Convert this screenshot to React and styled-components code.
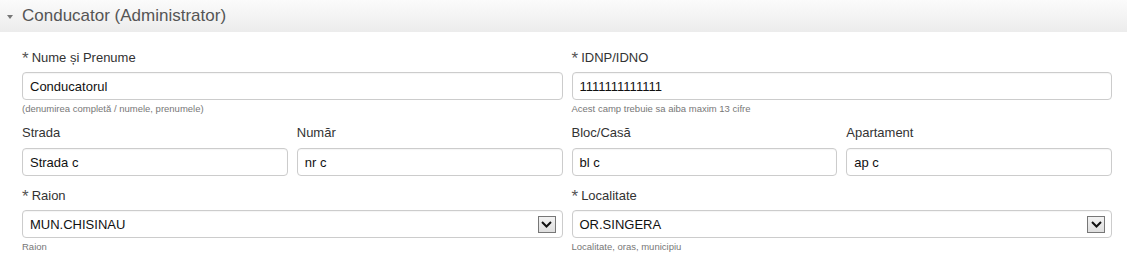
import React from "react";
import styled, { createGlobalStyle } from "styled-components";

const Global = createGlobalStyle`
  html, body { margin: 0; padding: 0; background: #fff; }
  body { font-family: "Liberation Sans", Arial, sans-serif; color: #333; }
  * { box-sizing: border-box; }
`;

const Panel = styled.section`
  width: 1127px;
`;

const Header = styled.div`
  height: 32px;
  display: flex;
  align-items: center;
  gap: 9px;
  padding-left: 7px;
  background: linear-gradient(to bottom, #fbfbfb 0%, #ececec 100%);
  color: #555;
  font-size: 17px;
`;

const Caret = styled.span`
  width: 0;
  height: 0;
  border-left: 3.5px solid transparent;
  border-right: 3.5px solid transparent;
  border-top: 4px solid #777;
  margin-top: 1px;
`;

const Body = styled.div`
  padding: 16px 15px 0 22px;
  display: flex;
  flex-direction: column;
  gap: 10px;
`;

const Row = styled.div`
  display: grid;
  grid-template-columns: ${(p) => p.$cols};
  column-gap: 9px;
`;

const Field = styled.div`
  display: flex;
  flex-direction: column;
  min-width: 0;
`;

const Label = styled.label`
  display: flex;
  align-items: baseline;
  gap: 3px;
  height: 18px;
  line-height: 18px;
  margin-bottom: 6px;
  font-size: 13px;
  color: #333;
`;

const Star = styled.span`
  font-size: 17px;
  color: #555;
  position: relative;
  top: 2px;
`;

const Box = styled.div`
  height: 28px;
  border: 1px solid #ccc;
  border-radius: 4px;
  background: #fff;
  display: flex;
  align-items: center;
  justify-content: space-between;
  padding: 0 6px 0 7px;
  font-size: 13px;
  color: #111;
  box-shadow: inset 0 1px 1px rgba(0, 0, 0, 0.04);
`;

const ArrowBtn = styled.span`
  width: 18px;
  height: 17px;
  border: 1px solid #777;
  background: linear-gradient(to bottom, #f2f2f2, #dedede);
  display: flex;
  align-items: center;
  justify-content: center;
`;

const Help = styled.div`
  margin-top: 3px;
  height: 11px;
  line-height: 11px;
  font-size: 9.5px;
  color: #777;
`;

const Chevron = () => (
  <svg width="11" height="7" viewBox="0 0 11 7">
    <path d="M1 1 L5.5 5.5 L10 1" fill="none" stroke="#111" strokeWidth="2" />
  </svg>
);

const Input = ({ label, value, required, help, select }) => (
  <Field>
    <Label>
      {required && <Star>*</Star>}
      <span>{label}</span>
    </Label>
    <Box>
      <span>{value}</span>
      {select && (
        <ArrowBtn>
          <Chevron />
        </ArrowBtn>
      )}
    </Box>
    {help && <Help>{help}</Help>}
  </Field>
);

export default function App() {
  return (
    <Panel>
      <Global />
      <Header>
        <Caret />
        <span>Conducator (Administrator)</span>
      </Header>
      <Body>
        <Row $cols="1fr 1fr">
          <Input
            required
            label="Nume și Prenume"
            value="Conducatorul"
            help="(denumirea completă / numele, prenumele)"
          />
          <Input
            required
            label="IDNP/IDNO"
            value="1111111111111"
            help="Acest camp trebuie sa aiba maxim 13 cifre"
          />
        </Row>
        <Row $cols="1fr 1fr 1fr 1fr">
          <Input label="Strada" value="Strada c" />
          <Input label="Număr" value="nr c" />
          <Input label="Bloc/Casă" value="bl c" />
          <Input label="Apartament" value="ap c" />
        </Row>
        <Row $cols="1fr 1fr">
          <Input required select label="Raion" value="MUN.CHISINAU" help="Raion" />
          <Input
            required
            select
            label="Localitate"
            value="OR.SINGERA"
            help="Localitate, oras, municipiu"
          />
        </Row>
      </Body>
    </Panel>
  );
}
